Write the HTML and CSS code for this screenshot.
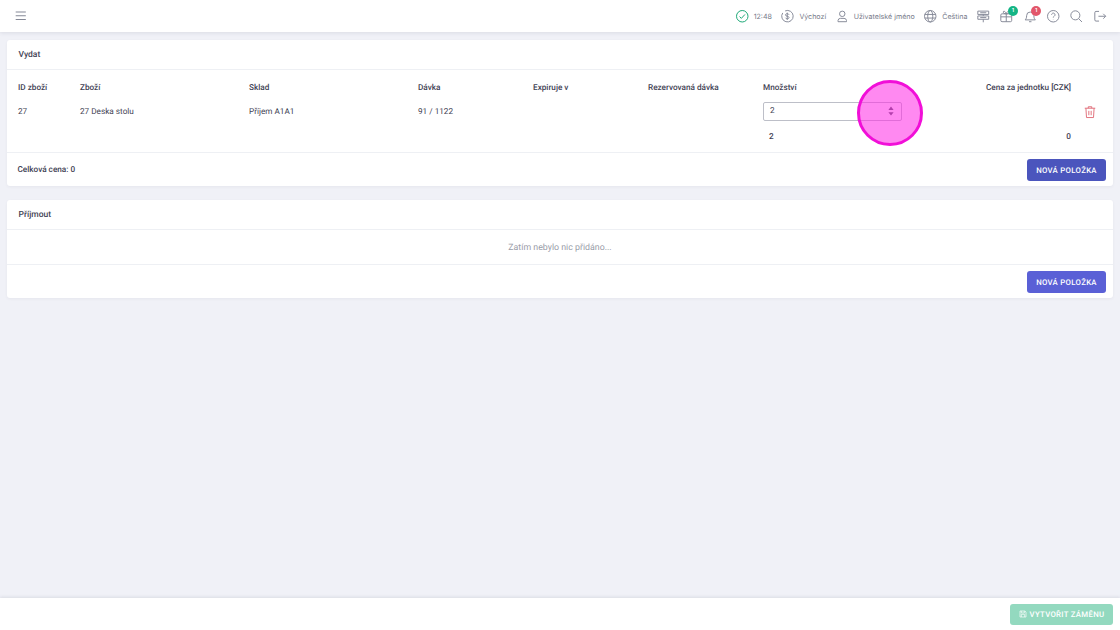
FILE: index.html
```html
<!DOCTYPE html>
<html lang="cs">
<head>
<meta charset="utf-8">
<title>Vydat</title>
<link rel="stylesheet" href="styles.css">
</head>
<body>
<div class="page">
  <header class="topbar">
    <svg class="ico menu" viewBox="0 0 24 24"><path d="M3 5.500h18M3 12h18M3 18.500h18"/></svg>
    <div class="tools">
      <span class="tool"><svg class="ico ok" viewBox="0 0 24 24"><circle cx="12" cy="12" r="9.500"/><path d="M7.500 12.500l3 3 6-6.500"/></svg><span>12:48</span></span>
      <span class="tool"><svg class="ico" viewBox="0 0 24 24"><path d="M8.500 3.200A9.500 9.500 0 1 1 4.500 6.500"/><path d="M15 9.500c-.5-1.100-1.600-1.800-3-1.800-1.700 0-3 .9-3 2.100 0 2.900 6 1.500 6 4.400 0 1.200-1.300 2.100-3 2.100-1.400 0-2.500-.7-3-1.800M12 6v12"/></svg><span>Výchozí</span></span>
      <span class="tool"><svg class="ico" viewBox="0 0 24 24"><circle cx="12" cy="8" r="4.500"/><path d="M5 21v-2a4 4 0 0 1 4-3.500h6a4 4 0 0 1 4 3.500v2z"/></svg><span>Uživatelské jméno</span></span>
      <span class="tool"><svg class="ico" viewBox="0 0 24 24"><circle cx="12" cy="12" r="9.500"/><ellipse cx="12" cy="12" rx="4.200" ry="9.500"/><path d="M3 9h18M3 15h18"/></svg><span>Čeština</span></span>
      <div class="icons">
        <svg class="ico" viewBox="0 0 24 24"><path d="M3 3.500h18v5.500H3zM3 11.500h18v5.500H3zM12 17v5M12 9v2.500M7 6.200h10M7 14.200h10"/></svg>
        <span class="badged"><svg class="ico" viewBox="0 0 24 24"><rect x="3" y="8" width="18" height="13" rx="2"/><path d="M3 13h18M12 8v13M12 8C9 8 7 7 7 5s3-2.500 5 3c2-5.500 5-5 5-3s-2 3-5 3z"/></svg><b class="badge green">1</b></span>
        <span class="badged"><svg class="ico" viewBox="0 0 24 24"><path d="M3.500 18h17c-1.500-1.500-2.500-3-2.500-7a6 6 0 0 0-12 0c0 4-1 5.500-2.500 7zM10 21h4"/></svg><b class="badge red">1</b></span>
        <svg class="ico" viewBox="0 0 24 24"><circle cx="12" cy="12" r="9.500"/><path d="M9.300 9.500a2.800 2.800 0 1 1 4.300 2.400c-1 .6-1.600 1.200-1.600 2.300M12 17v.4"/></svg>
        <svg class="ico" viewBox="0 0 24 24"><circle cx="10.500" cy="10.500" r="7.500"/><path d="M16 16l5.500 5.500"/></svg>
        <svg class="ico" viewBox="0 0 24 24"><path d="M10 4H5a2 2 0 0 0-2 2v12a2 2 0 0 0 2 2h5M9 12h12M17 8l4 4-4 4"/></svg>
      </div>
    </div>
  </header>

  <main class="content">
    <section class="card">
      <h2 class="card-title">Vydat</h2>
      <div class="items">
        <div class="row heads">
          <span>ID zboží</span><span>Zboží</span><span>Sklad</span><span>Dávka</span><span>Expiruje v</span><span>Rezervovaná dávka</span><span>Množství</span><span class="head-price">Cena za jednotku [CZK]</span>
        </div>
        <div class="row values">
          <span>27</span><span>27 Deska stolu</span><span>Příjem A1A1</span><span>91 / 1122</span><span></span><span></span>
          <span class="stepper"><span>2</span><svg class="arrows" viewBox="0 0 8 12"><path d="M4 0l3.500 4.500H.5zM4 12L.5 7.500h7z"/></svg></span>
          <span class="trash-cell"><svg class="trash" viewBox="0 0 24 24"><path d="M3 5.500h18M9 5.500V3h6v2.500M5 5.500l1 16h12l1-16M10 10v7.500M14 10v7.500"/></svg></span>
        </div>
        <div class="row totals">
          <span></span><span></span><span></span><span></span><span></span><span></span><span class="total-qty">2</span><span class="total-price">0</span>
        </div>
      </div>
      <footer class="card-foot">
        <strong class="sum">Celková cena: 0</strong>
        <button class="btn dim">NOVÁ POLOŽKA</button>
      </footer>
    </section>

    <section class="card">
      <h2 class="card-title">Příjmout</h2>
      <p class="empty">Zatím nebylo nic přidáno...</p>
      <footer class="card-foot">
        <span></span>
        <button class="btn">NOVÁ POLOŽKA</button>
      </footer>
    </section>
  </main>

  <footer class="bottombar">
    <button class="btn save"><svg viewBox="0 0 24 24"><path d="M3 3h15l3 3v15H3zM7 3v6h9V3M7 21v-8h10v8"/></svg>VYTVOŘIT ZÁMĚNU</button>
  </footer>
</div>
<div class="spot"></div>
</body>
</html>
```
FILE: styles.css
```css
* { box-sizing: border-box; }
html, body { margin: 0; height: 100%; }
body {
  font-family: Roboto, "Liberation Sans", sans-serif;
  font-size: 8.200px;
  color: #3f4254;
  background: #f0f1f7;
  overflow: hidden;
  text-rendering: geometricPrecision;
}
.page { display: flex; flex-direction: column; height: 630px; }

.topbar {
  flex: 0 0 32px;
  display: flex;
  align-items: center;
  justify-content: space-between;
  padding: 0 13px 0 14px;
  background: #fff;
  box-shadow: 0 1px 4px rgba(60, 64, 90, .12);
  color: #777b8a;
  font-family: Inter, "Liberation Sans", sans-serif;
  font-size: 7.100px;
}
.ico {
  width: 14.500px;
  height: 14.500px;
  fill: none;
  stroke: #858997;
  stroke-width: 1.600;
  flex: none;
}
.menu { width: 13.500px; height: 13.500px; stroke-width: 1.800; }
.tools { display: flex; align-items: center; }
.tool { display: flex; align-items: center; gap: 4.500px; margin-right: 8.500px; }
.tool .ok { stroke: #17a673; }
.icons { display: flex; align-items: center; gap: 8.800px; }
.badged { position: relative; display: flex; }
.badge {
  position: absolute;
  top: -3px;
  right: -4px;
  width: 10px;
  height: 10px;
  border-radius: 50%;
  color: #fff;
  font-size: 5.500px;
  font-weight: 600;
  line-height: 10px;
  text-align: center;
}
.green { background: #14b585; }
.red { background: #e2566a; }

.content {
  flex: 1;
  padding: 8px 7px;
  display: flex;
  flex-direction: column;
  gap: 14px;
}
.card {
  background: #fff;
  border-radius: 3px;
  box-shadow: 0 1px 3px rgba(60, 64, 90, .06);
}
.card-title {
  margin: 0;
  height: 29.500px;
  padding: 0 11.500px;
  font-size: 8.500px;
  font-weight: 500;
  line-height: 30px;
  color: #3f4254;
  border-bottom: 1px solid #eef0f4;
}
.items { padding: 11.500px 0 0; height: 83.500px; border-bottom: 1px solid #eef0f4; }
.row {
  display: grid;
  grid-template-columns: 62px 169px 169px 115px 115px 115px 223px 1fr;
  align-items: center;
  padding-left: 11px;
}
.heads { height: 13px; font-weight: 500; }
.head-price { white-space: nowrap; }
.values { height: 24px; margin-top: 6px; }
.totals { height: 12px; margin-top: 7px; font-weight: 500; }
.stepper {
  width: 139px;
  height: 19px;
  margin-top: -2px;
  display: flex;
  align-items: center;
  justify-content: space-between;
  padding: 0 7.500px 0 6px;
  border: 1px solid #bdbfc8;
  border-radius: 2px;
}
.arrows { width: 6px; height: 10px; fill: #555866; }
.trash-cell { display: flex; justify-content: flex-end; padding-right: 16px; }
.trash { width: 14px; height: 14px; fill: none; stroke: #e06a76; stroke-width: 1.600; }
.total-qty { padding-left: 6px; }
.total-price { text-align: right; padding-right: 42px; }
.card-foot {
  height: 33px;
  display: flex;
  align-items: center;
  justify-content: space-between;
  padding: 1px 7px 0 10.500px;
}
.sum { font-weight: 500; }
.btn {
  height: 22px;
  width: 79px;
  padding: 0;
  border: 0;
  border-radius: 3px;
  background: #5a60d6;
  color: #fff;
  font: 500 7.800px Roboto, "Liberation Sans", sans-serif;
  letter-spacing: .3px;
  text-rendering: geometricPrecision;
}
.btn.dim { background: #4b55bd; }
.empty {
  margin: 0;
  height: 35.500px;
  line-height: 36px;
  font-size: 8.800px;
  text-align: center;
  color: #9a9da9;
  border-bottom: 1px solid #eef0f4;
}

.bottombar {
  flex: 0 0 32px;
  display: flex;
  align-items: center;
  justify-content: flex-end;
  padding: 0 7px;
  background: #fff;
  box-shadow: 0 -1px 3px rgba(60, 64, 90, .12);
}
.save {
  width: 103px;
  height: 21px;
  background: #93d9bf;
  display: flex;
  align-items: center;
  justify-content: center;
  gap: 3px;
}
.save svg { width: 8px; height: 8px; fill: none; stroke: #fff; stroke-width: 2; }

.spot {
  position: absolute;
  left: 857px;
  top: 80px;
  width: 66px;
  height: 66px;
  border-radius: 50%;
  border: 3px solid #f10fd8;
  background: rgba(255, 40, 230, .55);
}
```
